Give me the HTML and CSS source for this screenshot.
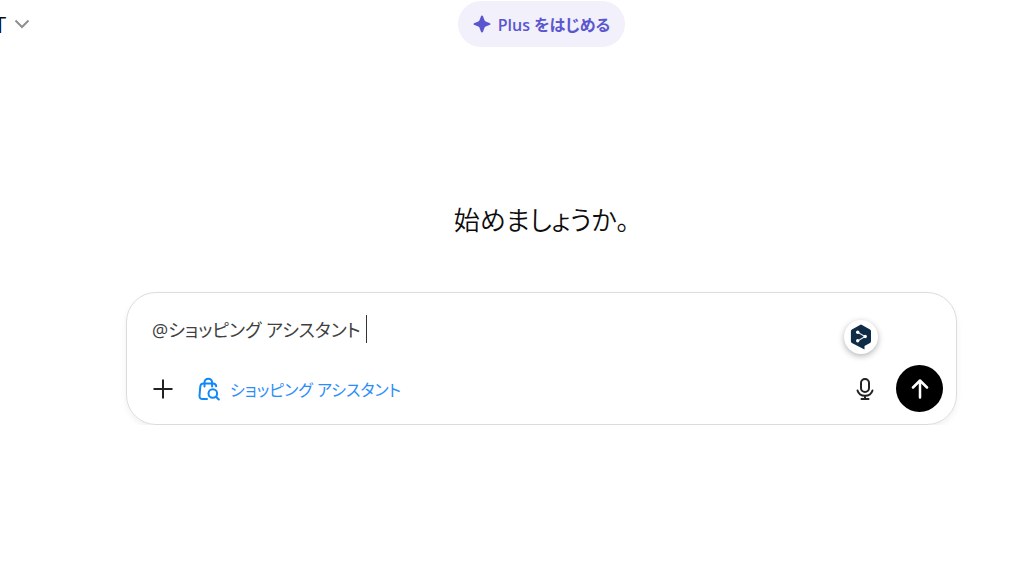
FILE: index.html
```html
<!DOCTYPE html>
<html lang="ja">

<head>
  <meta charset="UTF-8">
  <meta name="viewport" content="width=device-width, initial-scale=1.0">
  <title>始めましょうか。</title>
  <link rel="stylesheet" href="styles.css">
</head>

<body>

  <header class="topbar">
    <button type="button" class="model-btn">
      <span>T</span>
      <svg width="16" height="16" viewBox="0 0 16 16" fill="none" stroke="#8f8f8f" stroke-width="2" aria-hidden="true">
        <path d="M1.500 4.500L8 11l6.500-6.500"/>
      </svg>
    </button>
    <button type="button" class="plus-btn">
      <svg width="18" height="18" viewBox="0 0 18 18" fill="#5a56cf" aria-hidden="true">
        <path d="M9 .5c.6 0 .9.400 1.100 1l1.300 3.600c.2.700.6 1.100 1.300 1.400l3.700 1.400c.7.200 1.100.5 1.100 1.100s-.4.900-1.100 1.100l-3.700 1.400c-.7.300-1.100.7-1.300 1.400L10.100 16.500c-.2.600-.5 1-1.100 1s-.9-.4-1.100-1L6.600 12.900c-.2-.7-.6-1.100-1.300-1.400l-3.700-1.400C.900 9.900.500 9.600.500 9s.4-.9 1.100-1.100l3.700-1.400c.7-.3 1.100-.7 1.300-1.400L7.900 1.500c.2-.6.500-1 1.100-1z"/>
      </svg>
      <span>Plus をはじめる</span>
    </button>
  </header>

  <main class="content">
    <h1 class="greeting">始めましょうか。</h1>

    <form class="composer" onsubmit="return false;">
      <div class="prompt">
        <input type="text" class="prompt-input" value="@ショッピング アシスタント" aria-label="メッセージ">
        <span class="caret"></span>
      </div>

      <div class="actions">
        <button type="button" class="icon-btn" aria-label="追加">
          <svg width="20" height="20" viewBox="0 0 20 20" fill="none" stroke="#222" stroke-width="2" aria-hidden="true">
            <path d="M10 .5v19M.5 10h19"/>
          </svg>
        </button>
        <button type="button" class="tool-btn">
          <svg width="22" height="24" viewBox="0 0 22 24" fill="none" stroke="#1088f8" stroke-width="2" stroke-linecap="round" stroke-linejoin="round" aria-hidden="true">
            <path d="M9 22H4.500C2.500 22 1.300 20.700 1.500 18.700L2.300 9.500C2.500 7.500 3.600 6.500 5.500 6.500h9.500c1.900 0 3 1 3.200 2.800"/>
            <path d="M6.500 9.500V5.500a3.800 3.800 0 0 1 7.600 0v4"/>
            <circle cx="14.800" cy="16.500" r="4.300"/>
            <path d="M18 19.700l2.800 2.800"/>
          </svg>
          <span>ショッピング アシスタント</span>
        </button>
        <button type="button" class="icon-btn mic-btn" aria-label="音声入力">
          <svg width="18" height="24" viewBox="0 0 18 24" fill="none" stroke="#222" stroke-width="2" stroke-linecap="round" aria-hidden="true">
            <rect x="5" y="2" width="8" height="13" rx="4"/>
            <path d="M1.500 13.500c1 3.300 3.800 5.300 7.500 5.300s6.500-2 7.500-5.300M9 19v3M5.500 22h7"/>
          </svg>
        </button>
        <button type="submit" class="send-btn" aria-label="送信">
          <svg width="18" height="20" viewBox="0 0 18 20" fill="none" stroke="#fff" stroke-width="2.500" stroke-linecap="round" stroke-linejoin="round" aria-hidden="true">
            <path d="M9 18.500v-17M2 8.500l7-7 7 7"/>
          </svg>
        </button>
      </div>

      <button type="button" class="translate-btn" aria-label="翻訳">
        <svg width="22" height="26" viewBox="0 0 22 26" aria-hidden="true">
          <path fill="#0f2b46" d="M10 .9a2 2 0 0 1 2 0l8 4.600a2 2 0 0 1 1 1.700v10a2 2 0 0 1-1 1.700l-5.500 3.200V25.500L1.900 18.900a2 2 0 0 1-1-1.700v-10a2 2 0 0 1 1-1.700z"/>
          <path d="M8 8.500l7 4-7 4.300" fill="none" stroke="#dfe6ec" stroke-width="1.200"/>
          <g fill="#fff">
            <circle cx="7.700" cy="8.300" r="1.700"/>
            <circle cx="15.200" cy="12.500" r="1.700"/>
            <circle cx="7.700" cy="16.800" r="1.700"/>
          </g>
        </svg>
      </button>
    </form>
  </main>

</body>

</html>
```
FILE: styles.css
```css
:root {
  --side-left: 126px;
  --side-right: 67px;
}

* {
  box-sizing: border-box;
}

body {
  margin: 0;
  background: #fff;
  color: #0d0d0d;
  font-family: "Open Sans", "Noto Sans CJK JP", sans-serif;
  font-feature-settings: "palt";
  overflow-x: hidden;
}

button,
input {
  font: inherit;
  font-feature-settings: inherit;
  color: inherit;
  background: none;
  border: none;
  padding: 0;
}

button {
  display: flex;
  align-items: center;
  justify-content: center;
  cursor: pointer;
}

svg {
  flex: none;
}

.topbar {
  display: grid;
  grid-template-columns: var(--side-left) 1fr var(--side-right);
  align-items: center;
  height: 48px;
}

.model-btn {
  justify-self: start;
  gap: 8px;
  margin-left: -6px;
  font-size: 22px;
}

.plus-btn {
  justify-self: center;
  gap: 7px;
  height: 46px;
  padding: 0 15px;
  border-radius: 23px;
  background: #f1f0fb;
  color: #5a56cf;
  font-size: 16px;
  font-weight: 600;
}

.content {
  padding: 148px var(--side-right) 0 var(--side-left);
}

.greeting {
  margin: 0 0 48px;
  font-size: 26px;
  font-weight: 350;
  line-height: 48px;
  text-align: center;
}

.composer {
  position: relative;
  padding: 16px 13px 12px 25px;
  border: 1px solid #dcdcdc;
  border-radius: 30px;
  box-shadow: 0 3px 6px rgba(0, 0, 0, 0.06);
}

.prompt {
  display: flex;
  align-items: center;
  gap: 5px;
  height: 40px;
  color: #404040;
  font-size: 18px;
}

.prompt-input {
  field-sizing: content;
  outline: none;
}

.caret {
  width: 1px;
  height: 28px;
  background: #333;
}

.actions {
  display: flex;
  align-items: center;
  margin-top: 16px;
}

.icon-btn {
  width: 22px;
  height: 32px;
}

.tool-btn {
  gap: 10px;
  margin-left: 24px;
  color: #2a8dfa;
  font-size: 16px;
}

.mic-btn {
  margin-left: auto;
}

.send-btn {
  width: 47px;
  height: 47px;
  margin-left: 20px;
  border-radius: 50%;
  background: #000;
}

/* floats over the prompt area */
.translate-btn {
  position: absolute;
  top: 27px;
  right: 78px;
  width: 34px;
  height: 34px;
  border-radius: 50%;
  background: #fff;
  box-shadow: 0 2px 6px rgba(0, 0, 0, 0.3);
}
```
